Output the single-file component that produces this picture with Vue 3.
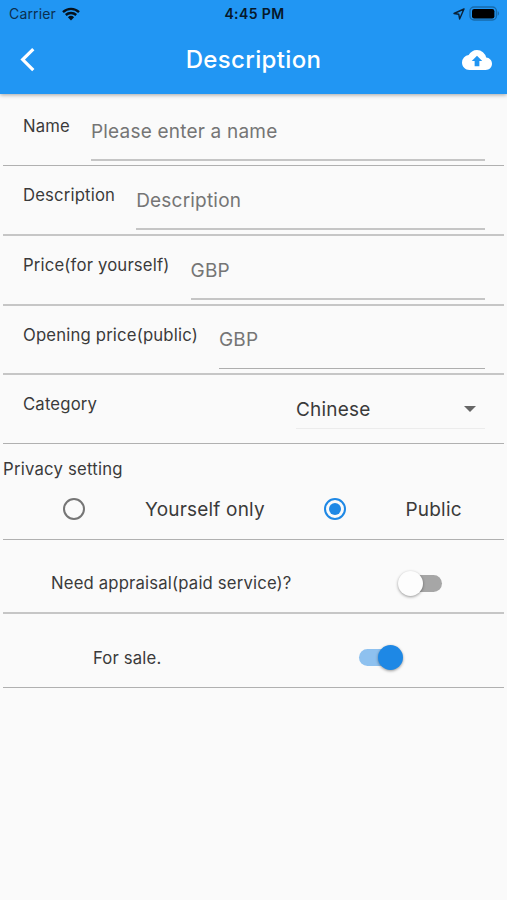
<script setup>
import { ref } from 'vue'

const fields = ref([
  { id: 'name', label: 'Name', hint: 'Please enter a name' },
  { id: 'description', label: 'Description', hint: 'Description' },
  { id: 'price', label: 'Price(for yourself)', hint: 'GBP' },
  { id: 'opening', label: 'Opening price(public)', hint: 'GBP' },
])
const privacy = ref('public')
const appraisal = ref(false)
const forSale = ref(true)
</script>

<template>
  <div class="screen">
    <header class="app-bar">
      <div class="status">
        <div class="carrier">
          <span>Carrier</span>
          <svg class="wifi" viewBox="0 0 18 14" width="18" height="14">
            <path d="M1 5.1a11.6 11.6 0 0 1 16 0" />
            <path d="M3.8 8a7.6 7.6 0 0 1 10.4 0" />
            <path class="dot" d="M9 13.4 5.9 10.2a4.6 4.6 0 0 1 6.2 0z" />
          </svg>
        </div>
        <span class="clock">4:45 PM</span>
        <div class="indicators">
          <svg class="location" viewBox="0 0 12 12" width="12" height="12">
            <path d="M11 1 1 5.5l4.8.8.8 4.7z" />
          </svg>
          <svg class="battery" viewBox="0 0 31 15" width="31" height="15">
            <rect class="case" x="1" y="1" width="26.4" height="13" rx="4" />
            <rect x="3" y="3" width="22.4" height="9.4" rx="2.2" />
            <path class="cap" d="M28.7 5.3c1.8.6 1.8 3.8 0 4.4z" />
          </svg>
        </div>
      </div>
      <div class="toolbar">
        <svg class="back" viewBox="0 0 16 26" width="16" height="26">
          <path d="M13.3 2.2 2.7 12.6l10.6 10.5" />
        </svg>
        <h1>Description</h1>
        <svg class="upload" viewBox="0 4 24 16" width="30" height="20">
          <path d="M19.35 10.04A7.49 7.49 0 0 0 12 4C9.11 4 6.6 5.64 5.35 8.04A5.994 5.994 0 0 0 0 14c0 3.31 2.69 6 6 6h13c2.76 0 5-2.24 5-5 0-2.64-2.05-4.78-4.65-4.96zM13.9 12.8v4.2h-3.8v-4.2H7.8L12 8.5l4.2 4.3z" />
        </svg>
      </div>
    </header>

    <main>
      <div v-for="f in fields" :key="f.id" class="row field" :class="f.id">
        <span class="label">{{ f.label }}</span>
        <div class="input"><span class="hint">{{ f.hint }}</span></div>
      </div>

      <div class="row field category">
        <span class="label">Category</span>
        <div class="select">
          <span class="value">Chinese</span>
          <svg viewBox="0 0 12 6" width="12" height="6"><path d="M0 0h12L6 6z" /></svg>
        </div>
      </div>

      <section class="row privacy-row">
        <span class="label privacy">Privacy setting</span>
        <div class="options">
          <div class="radio" :class="{ on: privacy === 'self' }" @click="privacy = 'self'"></div>
          <span class="option self">Yourself only</span>
          <div class="radio second" :class="{ on: privacy === 'public' }" @click="privacy = 'public'"></div>
          <span class="option public">Public</span>
        </div>
      </section>

      <div class="row toggle-row appraisal">
        <span class="label">Need appraisal(paid service)?</span>
        <div class="switch" :class="{ on: appraisal }" @click="appraisal = !appraisal"><i></i></div>
      </div>

      <div class="row toggle-row sale">
        <span class="label">For sale.</span>
        <div class="switch" :class="{ on: forSale }" @click="forSale = !forSale"><i></i></div>
      </div>
    </main>
  </div>
</template>

<style>
body {
  background: #fafafa;
}
</style>

<style scoped>
.screen {
  box-sizing: border-box;
  width: 507px;
  height: 900px;
  overflow: hidden;
  background: #fafafa;
  color: #3a3a3a;
  font-family: Inter, 'Liberation Sans', sans-serif;
  white-space: nowrap;
}
.app-bar {
  position: relative;
  height: 94px;
  background: #2196f3;
  box-shadow: 0 1px 4px rgba(0, 0, 0, 0.35);
}
.status {
  display: grid;
  grid-template-columns: 1fr auto 1fr;
  align-items: center;
  height: 27px;
  padding: 0 7px 0 9px;
  color: #0b2f50;
  font-size: 14px;
  letter-spacing: 0.15px;
}
.carrier {
  display: flex;
  align-items: center;
  gap: 6px;
}
.wifi {
  fill: none;
  stroke: #06121d;
  stroke-width: 2.4;
}
.wifi .dot {
  fill: #06121d;
  stroke: none;
}
.clock {
  color: #06182a;
  font-weight: 600;
  letter-spacing: 0.4px;
}
.indicators {
  display: flex;
  align-items: center;
  justify-content: flex-end;
  gap: 4px;
}
.location {
  fill: none;
  stroke: #0b2136;
  stroke-width: 1.4;
  stroke-linejoin: round;
}
.battery .case {
  fill: none;
  stroke: #176bac;
  stroke-width: 1.4;
}
.battery .cap {
  fill: #176bac;
}
.toolbar {
  display: grid;
  grid-template-columns: 1fr auto 1fr;
  align-items: center;
  height: 66px;
  padding: 0 15px;
}
.back {
  margin-left: 5px;
  fill: none;
  stroke: #fff;
  stroke-width: 3.2;
}
.upload {
  justify-self: end;
  fill: #fff;
}
h1 {
  margin: 0;
  color: #fff;
  font-size: 24px;
  font-weight: 500;
  line-height: 30px;
  letter-spacing: 0.35px;
}
main {
  padding: 0 3px;
}
.row {
  box-sizing: border-box;
  border-bottom: 1px solid #b0b0b0;
}
.field {
  display: flex;
  align-items: flex-start;
  justify-content: space-between;
  height: 70px;
  padding: 19px 19px 0 20px;
}
.field.name {
  height: 72px;
  padding-top: 22px;
}
.field.description,
.field.price,
.field.opening,
.appraisal {
  border-bottom: 2px solid #c6c6c6;
}
.field.opening,
.field.category {
  height: 69px;
}
.label {
  font-size: 16.7px;
  line-height: 20px;
  letter-spacing: 0.17px;
}
.input {
  flex: 1;
  box-sizing: border-box;
  height: 45px;
  margin-left: 21px;
  border-bottom: 2px solid #c5c5c5;
  padding-top: 4px;
  color: #757575;
  font-size: 19px;
  line-height: 24px;
  letter-spacing: 0.2px;
}
.opening .input {
  height: 44px;
  padding-top: 3px;
  border-bottom: 1px solid #aeaeae;
}
.select {
  display: flex;
  box-sizing: border-box;
  justify-content: space-between;
  width: 189px;
  height: 35px;
  padding: 4px 9px 0 0;
  border-bottom: 1px solid #ececec;
  font-size: 19px;
  line-height: 24px;
  letter-spacing: 0.2px;
}
.select svg {
  margin-top: 8px;
  fill: #666;
}
.privacy-row {
  height: 96px;
  padding-top: 15px;
}
.privacy {
  display: block;
  letter-spacing: 0.22px;
}
.options {
  display: flex;
  align-items: center;
  height: 60px;
  padding-left: 60px;
  font-size: 19px;
  letter-spacing: 0.2px;
}
.radio {
  display: grid;
  box-sizing: border-box;
  width: 22px;
  height: 22px;
  place-items: center;
  border: 2.4px solid #757575;
  border-radius: 50%;
}
.radio.on {
  border-color: #1e88e5;
}
.radio.on::after {
  width: 12px;
  height: 12px;
  border-radius: 50%;
  background: #1e88e5;
  content: '';
}
.self {
  width: 119px;
  margin-left: 60px;
}
.second {
  margin-left: 60px;
}
.public {
  margin-left: 59.5px;
}
.toggle-row {
  display: flex;
  align-items: center;
  height: 74px;
  padding-top: 14px;
}
.appraisal {
  padding-left: 48px;
}
.appraisal .label {
  width: 240px;
  margin-right: 107.5px;
}
.sale {
  padding-left: 90px;
}
.sale .label {
  width: 68px;
  margin-right: 197.5px;
}
.switch {
  display: flex;
  align-items: center;
  width: 43px;
  height: 17px;
  border-radius: 9px;
  background: #a6a6a6;
}
.switch i {
  flex: none;
  width: 25px;
  height: 25px;
  margin: 0 -1.5px 0 -1px;
  border-radius: 50%;
  background: #fdfdfd;
  box-shadow: 0 1px 3px rgba(0, 0, 0, 0.4);
}
.switch.on {
  justify-content: flex-end;
  background: #8ec1ef;
}
.switch.on i {
  background: #1e88e5;
}
</style>
